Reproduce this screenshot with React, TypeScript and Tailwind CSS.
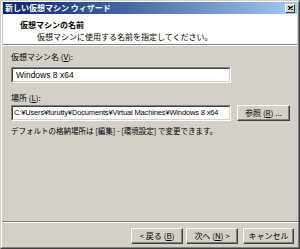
import React from "react";

const font = { fontFamily: '"Noto Sans CJK JP", "Liberation Sans", sans-serif' };
const latin = { fontFamily: '"Liberation Sans", "Noto Sans CJK JP", sans-serif' };

function Btn({ children, className = "" }: { children: React.ReactNode; className?: string }) {
  return (
    <div
      className={`h-[16px] flex items-center justify-center text-[8px] text-black bg-[#d4d0c8] border border-t-white border-l-white border-r-[#404040] border-b-[#404040] shadow-[inset_-1px_-1px_0_#808080] ${className}`}
    >
      {children}
    </div>
  );
}

export default function App() {
  return (
    <div
      className="w-[300px] h-[249px] bg-[#d4d0c8] border border-t-[#d4d0c8] border-l-[#d4d0c8] border-r-[#404040] border-b-[#404040] flex flex-col overflow-hidden leading-none"
      style={font}
    >
      <div className="flex flex-col flex-1 border border-t-white border-l-white border-r-[#808080] border-b-[#808080]">
        {/* title bar */}
        <div className="h-[12px] mx-[1px] flex items-center justify-between bg-gradient-to-r from-[#0a246a] to-[#a6caf0] pl-[2px] pr-[2px]">
          <span className="text-white font-bold text-[8px] leading-none">新しい仮想マシン ウィザード</span>
          <div className="w-[10px] h-[9px] bg-[#d4d0c8] border border-t-white border-l-white border-r-[#404040] border-b-[#404040] flex items-center justify-center">
            <svg width="5" height="4" viewBox="0 0 5 4">
              <path d="M0 0 L5 4 M5 0 L0 4" stroke="black" strokeWidth="1.2" />
            </svg>
          </div>
        </div>
        {/* header */}
        <div className="h-[31px] bg-white mx-[1px] flex flex-col pl-[17px] pt-[7px] gap-[4px] border-b border-b-[#808080]">
          <span className="font-bold text-[8px] text-black">仮想マシンの名前</span>
          <span className="text-[8px] text-black pl-[17px]">仮想マシンに使用する名前を指定してください。</span>
        </div>
        <div className="h-[1px] bg-white mx-[1px]" />
        {/* body */}
        <div className="flex-1 flex flex-col px-[9px] pt-[7px]">
          <span className="text-[8px] text-black">仮想マシン名 (<u>V</u>):</span>
          <div className="mt-[6px] w-[220px] h-[16px] bg-white border border-t-[#808080] border-l-[#808080] border-r-white border-b-white">
            <div className="w-full h-full border border-t-[#404040] border-l-[#404040] border-r-[#d4d0c8] border-b-[#d4d0c8] flex items-center pl-[3px]">
              <span className="text-[8.5px] text-black" style={latin}>Windows 8 x64</span>
            </div>
          </div>
          <span className="mt-[11px] text-[8px] text-black">場所 (<u>L</u>):</span>
          <div className="mt-[3px] flex items-center">
            <div className="w-[220px] shrink-0 h-[16px] bg-white border border-t-[#808080] border-l-[#808080] border-r-white border-b-white">
              <div className="w-full h-full border border-t-[#404040] border-l-[#404040] border-r-[#d4d0c8] border-b-[#d4d0c8] flex items-center pl-[1px] overflow-hidden whitespace-nowrap">
                <span className="text-[7.5px] text-black tracking-[-0.15px]" style={latin}>C:¥Users¥furutty¥Documents¥Virtual Machines¥Windows 8 x64</span>
              </div>
            </div>
            <Btn className="w-[53px] ml-[6px] shrink-0">参照 (<u>R</u>) ...</Btn>
          </div>
          <span className="mt-[6px] text-[7.5px] text-black whitespace-nowrap">デフォルトの格納場所は [編集] - [環境設定] で変更できます。</span>
          <div className="flex-1" />
        </div>
        {/* separator */}
        <div className="h-[1px] bg-[#808080]" />
        <div className="h-[1px] bg-white" />
        <div className="h-[24px] flex items-start justify-end pt-[5px] pr-[4px]">
          <Btn className="w-[52px]">&lt; 戻る (<u>B</u>)</Btn>
          <Btn className="w-[52px] ml-[3px]">次へ (<u>N</u>) &gt;</Btn>
          <Btn className="w-[51px] ml-[5px]">キャンセル</Btn>
        </div>
      </div>
    </div>
  );
}
